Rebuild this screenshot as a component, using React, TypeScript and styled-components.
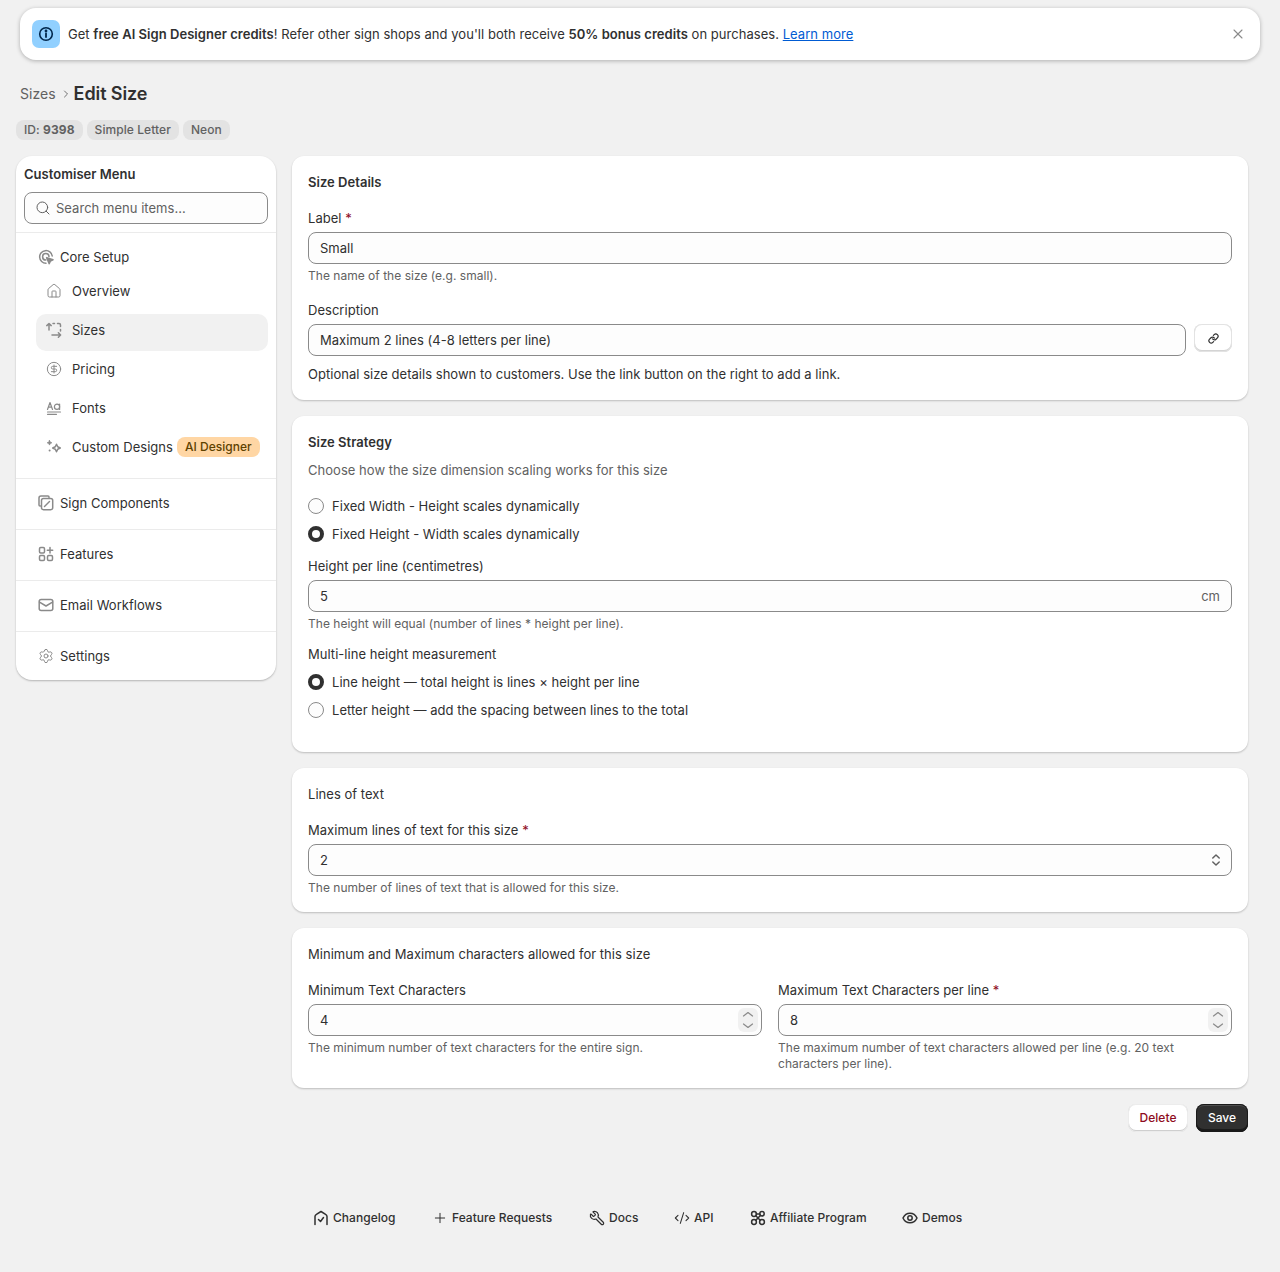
import React from 'react'
import styled, { createGlobalStyle } from 'styled-components'
import { Search, X, House, CircleDollarSign, ChevronRight, Link as LinkGlyph, Settings, Plus, Wrench, CodeXml } from 'lucide-react'

const GlobalStyle = createGlobalStyle`
  html, body { margin: 0; padding: 0; background: #f1f1f1; }
  body {
    font-family: Inter, "Liberation Sans", sans-serif;
    font-size: 13px;
    line-height: 20px;
    letter-spacing: 0.03px;
    color: #303030;
  }
  * { box-sizing: border-box; }
`

const Page = styled.div`
  width: 1280px;
  height: 1272px;
  padding-top: 8px;
`

const Banner = styled.div`
  margin: 0 20px;
  height: 52px;
  background: #fff;
  border-radius: 16px;
  box-shadow: 0 1px 4px rgba(0, 0, 0, 0.28);
  display: flex;
  align-items: center;
  padding: 0 12px;
  gap: 8px;
`

const InfoTile = styled.div`
  width: 28px;
  height: 28px;
  border-radius: 7px;
  background: #91d0ff;
  display: flex;
  align-items: center;
  justify-content: center;
  color: #00274c;
`

const BannerText = styled.div`
  flex: 1;
  letter-spacing: 0.04px;
  b { font-weight: 600; }
  a { color: #005bd3; text-decoration: underline; }
`

const CloseBtn = styled.div`
  display: flex;
  color: #8a8a8a;
  margin-right: 2px;
`

const TitleRow = styled.div`
  margin: 22px 0 0 20px;
  height: 24px;
  display: flex;
  align-items: center;
`

const Crumb = styled.span`
  color: #616161;
  font-size: 14px;
`

const CrumbSep = styled.span`
  display: flex;
  color: #616161;
  margin: 0 2px 0 4px;
`

const PageTitle = styled.h1`
  margin: 0;
  font-size: 18px;
  font-weight: 600;
  letter-spacing: -0.1px;
  color: #303030;
`

const BadgeRow = styled.div`
  margin: 14px 0 0 16px;
  display: flex;
  gap: 4px;
`

const Badge = styled.span`
  height: 20px;
  padding: 0 8px;
  border-radius: 8px;
  background: #e3e3e3;
  color: #616161;
  font-size: 12px;
  font-weight: 500;
  line-height: 20px;
  letter-spacing: 0.08px;
  b { font-weight: 700; }
`

const Columns = styled.div`
  margin: 16px 0 0 16px;
  width: 1232px;
  display: grid;
  grid-template-columns: 260px 956px;
  gap: 16px;
  align-items: start;
`

const Side = styled.aside`
  background: #fff;
  border-radius: 16px;
  box-shadow: 0 1px 2px rgba(0, 0, 0, 0.25);
  overflow: hidden;
`

const SideHead = styled.div`
  padding: 8px;
  border-bottom: 1px solid #ebebeb;
`

const SideTitle = styled.div`
  font-weight: 600;
  margin-bottom: 8px;
`

const SearchBox = styled.div`
  height: 32px;
  border: 1px solid #8a8a8a;
  border-radius: 8px;
  background: #fdfdfd;
  display: flex;
  align-items: center;
  gap: 5px;
  padding: 0 10px;
  color: #616161;
`

const SideSection = styled.div<{ $h: number }>`
  height: ${(p) => p.$h}px;
  padding-bottom: 2px;
  border-bottom: 1px solid #ebebeb;
  display: flex;
  flex-direction: column;
  justify-content: center;
  &:last-child { border-bottom: none; padding-bottom: 0; }
`

const CoreSection = styled.div`
  height: 246px;
  padding-top: 14px;
  border-bottom: 1px solid #ebebeb;
`

const TopItem = styled.div`
  display: flex;
  align-items: center;
  gap: 6px;
  padding-left: 22px;
  height: 20px;
  color: #303030;
  svg { color: #8a8a8a; flex: none; }
`

const SubList = styled.div`
  margin: 8px 8px 0 20px;
  display: flex;
  flex-direction: column;
  gap: 2px;
`

const SubItem = styled.div<{ $active?: boolean }>`
  height: 37px;
  display: flex;
  align-items: center;
  gap: 10px;
  padding: 0 0 6px 10px;
  border-radius: 10px;
  background: ${(p) => (p.$active ? '#f1f1f1' : 'transparent')};
  svg { color: #8a8a8a; flex: none; }
`

const AiTag = styled.span`
  margin-left: -6px;
  height: 20px;
  padding: 0 8px;
  border-radius: 8px;
  background: #ffd6a4;
  color: #5e4200;
  font-size: 12px;
  font-weight: 500;
  line-height: 20px;
  white-space: nowrap;
`

const Main = styled.main`
  display: flex;
  flex-direction: column;
  gap: 16px;
`

const Card = styled.section<{ $h: number }>`
  height: ${(p) => p.$h}px;
  background: #fff;
  border-radius: 12px;
  box-shadow: 0 1px 2px rgba(0, 0, 0, 0.22);
  padding: 16px 16px 0;
`

const CardTitle = styled.div<{ $plain?: boolean }>`
  font-weight: ${(p) => (p.$plain ? 400 : 600)};
`

const Label = styled.div`
  margin-bottom: 4px;
  em { font-style: normal; color: #8e0b21; }
`

const Field = styled.div<{ $top?: number }>`
  margin-top: ${(p) => p.$top ?? 16}px;
`

const InputBox = styled.div`
  height: 32px;
  border: 1px solid #8a8a8a;
  border-radius: 8px;
  background: #fdfdfd;
  display: flex;
  align-items: center;
  justify-content: space-between;
  padding: 0 3px 0 11px;
`

const Help = styled.div`
  margin-top: 4px;
  font-size: 12px;
  line-height: 16px;
  letter-spacing: 0.02px;
  color: #616161;
`

const LinkRow = styled.div`
  display: flex;
  gap: 8px;
  ${InputBox} { flex: 1; }
`

const IconBtn = styled.div`
  width: 38px;
  height: 28px;
  border-radius: 8px;
  background: #fff;
  box-shadow: inset 0 0 0 1px #e3e3e3, inset 0 -1px 0 1px #d4d4d4;
  display: flex;
  align-items: center;
  justify-content: center;
  color: #303030;
`

const Muted = styled.div`
  margin-top: 8px;
  color: #616161;
`

const PlainNote = styled.div`
  margin-top: 8px;
`

const RadioGroup = styled.div<{ $top: number }>`
  margin-top: ${(p) => p.$top}px;
  display: flex;
  flex-direction: column;
  gap: 8px;
`

const RadioRow = styled.div`
  height: 20px;
  display: flex;
  align-items: center;
  gap: 8px;
`

const RadioDot = styled.span<{ $on?: boolean }>`
  width: 16px;
  height: 16px;
  border-radius: 50%;
  background: #fdfdfd;
  border: ${(p) => (p.$on ? '4.5px solid #303030' : '1px solid #8a8a8a')};
`

const Unit = styled.span`
  color: #616161;
  margin-right: 8px;
`

const Stepper = styled.div`
  width: 20px;
  height: 24px;
  border-radius: 6px;
  background: #f1f1f1;
  color: #8a8a8a;
  display: flex;
  align-items: center;
  justify-content: center;
`

const SelectArrows = styled.div`
  display: flex;
  color: #616161;
  margin-right: 4px;
`

const TwoCols = styled.div`
  margin-top: 16px;
  display: grid;
  grid-template-columns: 1fr 1fr;
  gap: 16px;
`

const Actions = styled.div`
  display: flex;
  justify-content: flex-end;
  gap: 8px;
`

const DeleteBtn = styled.div`
  height: 28px;
  width: 60px;
  text-align: center;
  border-radius: 8px;
  background: #fff;
  color: #8e0b21;
  font-size: 12px;
  font-weight: 500;
  line-height: 27px;
  box-shadow: inset 0 0 0 1px #ececec, inset 0 -1px 0 1px #cfcfcf;
`

const SaveBtn = styled.div`
  height: 28px;
  width: 52px;
  text-align: center;
  border-radius: 8px;
  background: #303030;
  color: #fff;
  font-size: 12px;
  font-weight: 500;
  line-height: 27px;
  box-shadow: inset 0 0 0 1px #1a1a1a, inset 0 2px 0 rgba(255, 255, 255, 0.15), inset 0 -3px 0 #1a1a1a;
`

const Footer = styled.footer`
  margin-top: 76px;
  padding-left: 313px;
  display: flex;
  align-items: center;
`

const FootLink = styled.div<{ $w: number }>`
  width: ${(p) => p.$w}px;
  display: flex;
  align-items: center;
  gap: 4px;
  font-size: 12px;
  font-weight: 500;
  letter-spacing: 0.03px;
  svg { flex: none; color: #303030; }
`

const MirroredWrench = styled(Wrench)`
  transform: scaleX(-1);
`

const ic = { fill: 'none', stroke: 'currentColor', strokeWidth: 1.5, strokeLinecap: 'round', strokeLinejoin: 'round' } as const

const InfoIcon = () => (
  <svg width="16" height="16" viewBox="0 0 16 16" {...ic} strokeWidth={1.6}>
    <circle cx="8" cy="8" r="6.3" />
    <path d="M8 7.4v3.6" strokeWidth={1.8} />
    <circle cx="8" cy="5" r=".6" fill="currentColor" />
  </svg>
)

const CursorIcon = () => (
  <svg width="16" height="16" viewBox="0 0 16 16" {...ic}>
    <path d="M8 14.2A6.3 6.3 0 1 1 14.2 7" />
    <path d="M7.8 11A3.2 3.2 0 1 1 11 7.6" />
    <path d="M8.6 8.6l6.4 2.2-2.6 1.2-1.2 2.8z" fill="currentColor" />
  </svg>
)

const SizesIcon = () => (
  <svg width="16" height="16" viewBox="0 0 16 16" {...ic}>
    <path d="M3 8V1.5M.8 3.6 3 1.5l2.2 2.1" />
    <path d="M7 1.5h1.5M11.5 1.5H13A1.5 1.500 0 0 1 14.5 3v1.500M14.5 7.500V9" />
    <path d="M6 13h8.5M12.4 10.8l2.2 2.2-2.2 2.2" />
  </svg>
)

const FontsIcon = () => (
  <svg width="16" height="16" viewBox="0 0 16 16" {...ic} strokeWidth={1.2}>
    <path d="M1.5 9.500 4 2.500l2.500 7M2.400 7.200h3.200" />
    <circle cx="11" cy="6.700" r="2.600" />
    <path d="M13.600 4v5.500" />
    <path d="M1.500 12h13M1.500 14.300h9" />
  </svg>
)

const SparkIcon = () => (
  <svg width="16" height="16" viewBox="0 0 16 16" {...ic}>
    <path d="M10.500 5.200l1.200 2.600 2.600 1.200-2.600 1.200-1.200 2.600-1.200-2.600-2.600-1.200 2.600-1.200z" />
    <path d="M3.500 1.500l.7 1.600 1.600.7-1.600.7-.7 1.600-.7-1.600-1.600-.7 1.600-.7z" fill="currentColor" strokeWidth={.8} />
    <path d="M3.600 11.400v.1" strokeWidth={2} />
  </svg>
)

const ComponentsIcon = () => (
  <svg width="16" height="16" viewBox="0 0 16 16" {...ic}>
    <path d="M11 2.500V2A1 1 0 0 0 10 1H3a2 2 0 0 0-2 2v7a1 1 0 0 0 1 1h.5" />
    <rect x="3.500" y="3.500" width="11.200" height="11.200" rx="2" />
    <path d="M6.500 11.500 11.500 6.500" />
  </svg>
)

const FeaturesIcon = () => (
  <svg width="16" height="16" viewBox="0 0 16 16" {...ic}>
    <rect x="1.500" y="1.500" width="5" height="5.500" rx="1.200" />
    <rect x="1.500" y="9.500" width="5" height="5" rx="1.200" />
    <rect x="9.500" y="9.500" width="5" height="5" rx="1.200" />
    <path d="M12 1.500v5.500M9.300 4.200h5.400" />
  </svg>
)

const MailIcon = () => (
  <svg width="16" height="16" viewBox="0 0 16 16" {...ic}>
    <rect x="1.200" y="2.500" width="13.600" height="11" rx="2" />
    <path d="M1.500 5.200 8 9l6.500-3.800" />
  </svg>
)

const ChangelogIcon = () => (
  <svg width="16" height="16" viewBox="0 0 16 16" {...ic}>
    <path d="M2 14.500V6.500C2 5.400 2.500 4.800 3.400 4.300L8 1.500l4.600 2.800c.9.5 1.400 1.100 1.400 2.200v8" />
    <path d="M5.500 9.500 7.500 11.500l3-4" />
  </svg>
)

const AffiliateIcon = () => (
  <svg width="16" height="16" viewBox="0 0 16 16" {...ic}>
    <circle cx="4" cy="4" r="2.400" />
    <circle cx="12" cy="3.800" r="2.200" />
    <circle cx="4" cy="12" r="2.400" />
    <circle cx="12" cy="12" r="2.400" />
    <path d="M5.800 5.800 10.200 10.200M6.200 3.900h3.600M5.800 10.200l4.600-4.800" />
  </svg>
)

const EyeIcon = () => (
  <svg width="16" height="16" viewBox="0 0 16 16" {...ic}>
    <path d="M1 8c1.400-3 4-4.800 7-4.800S13.600 5 15 8c-1.400 3-4 4.800-7 4.800S2.400 11 1 8z" />
    <circle cx="8" cy="8" r="2.200" />
  </svg>
)

const UpDown = ({ size = 16 }: { size?: number }) => (
  <svg width={size} height={size} viewBox="0 0 16 16" {...ic}>
    <path d="M4.800 6 8 3l3.200 3M4.800 10 8 13l3.200-3" />
  </svg>
)

const StepArrows = () => (
  <svg width="14" height="22" viewBox="0 0 14 22" {...ic} strokeWidth={1.2}>
    <path d="M2.500 7 7 3.500l4.500 3.500M2.500 15 7 18.500l4.500-3.500" />
  </svg>
)

function App() {
  return (
    <Page>
      <GlobalStyle />
      <Banner>
        <InfoTile><InfoIcon /></InfoTile>
        <BannerText>
          Get <b>free AI Sign Designer credits</b>! Refer other sign shops and you'll both receive <b>50% bonus credits</b> on purchases. <a>Learn more</a>
        </BannerText>
        <CloseBtn><X size={16} strokeWidth={1.6} /></CloseBtn>
      </Banner>

      <TitleRow>
        <Crumb>Sizes</Crumb>
        <CrumbSep><ChevronRight size={12} strokeWidth={1.8} /></CrumbSep>
        <PageTitle>Edit Size</PageTitle>
      </TitleRow>

      <BadgeRow>
        <Badge>ID: <b>9398</b></Badge>
        <Badge>Simple Letter</Badge>
        <Badge>Neon</Badge>
      </BadgeRow>

      <Columns>
        <Side>
          <SideHead>
            <SideTitle>Customiser Menu</SideTitle>
            <SearchBox><Search size={16} strokeWidth={1.5} />Search menu items...</SearchBox>
          </SideHead>
          <CoreSection>
            <TopItem><CursorIcon />Core Setup</TopItem>
            <SubList>
              <SubItem><House size={16} strokeWidth={1.5} />Overview</SubItem>
              <SubItem $active><SizesIcon />Sizes</SubItem>
              <SubItem><CircleDollarSign size={16} strokeWidth={1.5} />Pricing</SubItem>
              <SubItem><FontsIcon />Fonts</SubItem>
              <SubItem><SparkIcon />Custom Designs <AiTag>AI Designer</AiTag></SubItem>
            </SubList>
          </CoreSection>
          <SideSection $h={51}><TopItem><ComponentsIcon />Sign Components</TopItem></SideSection>
          <SideSection $h={51}><TopItem><FeaturesIcon />Features</TopItem></SideSection>
          <SideSection $h={51}><TopItem><MailIcon />Email Workflows</TopItem></SideSection>
          <SideSection $h={48}><TopItem><Settings size={16} strokeWidth={1.5} />Settings</TopItem></SideSection>
        </Side>

        <Main>
          <Card $h={244}>
            <CardTitle>Size Details</CardTitle>
            <Field>
              <Label>Label <em>*</em></Label>
              <InputBox>Small</InputBox>
              <Help>The name of the size (e.g. small).</Help>
            </Field>
            <Field>
              <Label>Description</Label>
              <LinkRow>
                <InputBox>Maximum 2 lines (4-8 letters per line)</InputBox>
                <IconBtn><LinkGlyph size={11} strokeWidth={2.6} /></IconBtn>
              </LinkRow>
              <PlainNote>Optional size details shown to customers. Use the link button on the right to add a link.</PlainNote>
            </Field>
          </Card>

          <Card $h={336}>
            <CardTitle>Size Strategy</CardTitle>
            <Muted>Choose how the size dimension scaling works for this size</Muted>
            <RadioGroup $top={16}>
              <RadioRow><RadioDot />Fixed Width - Height scales dynamically</RadioRow>
              <RadioRow><RadioDot $on />Fixed Height - Width scales dynamically</RadioRow>
            </RadioGroup>
            <Field $top={12}>
              <Label>Height per line (centimetres)</Label>
              <InputBox>5<Unit>cm</Unit></InputBox>
              <Help>The height will equal (number of lines * height per line).</Help>
            </Field>
            <Field $top={12}>
              <Label>Multi-line height measurement</Label>
              <RadioGroup $top={8}>
                <RadioRow><RadioDot $on />Line height — total height is lines × height per line</RadioRow>
                <RadioRow><RadioDot />Letter height — add the spacing between lines to the total</RadioRow>
              </RadioGroup>
            </Field>
          </Card>

          <Card $h={144}>
            <CardTitle $plain>Lines of text</CardTitle>
            <Field>
              <Label>Maximum lines of text for this size <em>*</em></Label>
              <InputBox>2<SelectArrows><UpDown /></SelectArrows></InputBox>
              <Help>The number of lines of text that is allowed for this size.</Help>
            </Field>
          </Card>

          <Card $h={160}>
            <CardTitle $plain>Minimum and Maximum characters allowed for this size</CardTitle>
            <TwoCols>
              <div>
                <Label>Minimum Text Characters</Label>
                <InputBox>4<Stepper><StepArrows /></Stepper></InputBox>
                <Help>The minimum number of text characters for the entire sign.</Help>
              </div>
              <div>
                <Label>Maximum Text Characters per line <em>*</em></Label>
                <InputBox>8<Stepper><StepArrows /></Stepper></InputBox>
                <Help>The maximum number of text characters allowed per line (e.g. 20 text characters per line).</Help>
              </div>
            </TwoCols>
          </Card>

          <Actions>
            <DeleteBtn>Delete</DeleteBtn>
            <SaveBtn>Save</SaveBtn>
          </Actions>
        </Main>
      </Columns>

      <Footer>
        <FootLink $w={119}><ChangelogIcon />Changelog</FootLink>
        <FootLink $w={157}><Plus size={16} strokeWidth={1.5} />Feature Requests</FootLink>
        <FootLink $w={85}><MirroredWrench size={16} strokeWidth={1.8} />Docs</FootLink>
        <FootLink $w={76}><CodeXml size={16} strokeWidth={1.6} />API</FootLink>
        <FootLink $w={152}><AffiliateIcon />Affiliate Program</FootLink>
        <FootLink $w={70}><EyeIcon />Demos</FootLink>
      </Footer>
    </Page>
  )
}

export default App
